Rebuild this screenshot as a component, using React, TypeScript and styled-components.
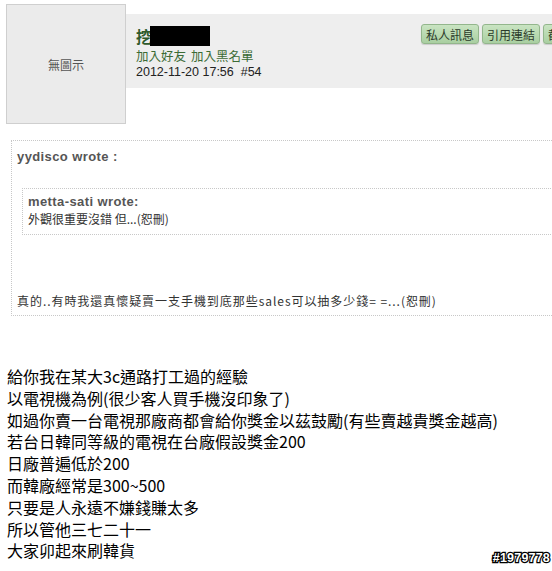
import React from "react";
import styled, { createGlobalStyle } from "styled-components";

const Global = createGlobalStyle`
  html, body { margin: 0; padding: 0; background: #ffffff; }
  body { font-family: "Liberation Sans", "Noto Sans CJK TC", sans-serif; }
`;

const Viewport = styled.div`
  position: relative;
  width: 552px;
  height: 571px;
  overflow: hidden;
  background: #fff;
`;

const Page = styled.div`
  width: 680px;
`;

const PostHeader = styled.div`
  display: flex;
  align-items: flex-start;
  padding: 4px 0 0 6px;
`;

const Avatar = styled.div`
  box-sizing: border-box;
  flex: 0 0 120px;
  height: 120px;
  background: #ebebeb;
  border: 1px solid #cfcfcf;
  display: flex;
  align-items: center;
  justify-content: center;
  font-size: 12px;
  color: #555;
`;

const Band = styled.div`
  flex: 1;
  margin-top: 10px;
  height: 74px;
  background: #eeeeee;
  display: flex;
  align-items: flex-start;
  padding-left: 10px;
`;

const Info = styled.div`
  flex: 0 0 285px;
  padding-top: 11px;
  display: flex;
  flex-direction: column;
`;

const NameRow = styled.div`
  display: flex;
  align-items: center;
  height: 21px;
  font-size: 16px;
  font-weight: bold;
  color: #2f5a2c;
  font-family: "Noto Sans CJK TC", sans-serif;
`;

const Redacted = styled.span`
  display: inline-block;
  width: 60px;
  height: 20px;
  background: #000;
  margin-left: -2px;
`;

const Links = styled.div`
  margin-top: 2px;
  display: flex;
  gap: 5px;
  font-size: 12.5px;
  line-height: 16px;
  color: #3b6b35;
  font-family: "Noto Sans CJK TC", sans-serif;
`;

const Meta = styled.div`
  font-size: 12.5px;
  line-height: 16px;
  color: #222;
`;

const Buttons = styled.div`
  display: flex;
  gap: 3px;
  padding-top: 10px;
`;

const Button = styled.div`
  box-sizing: border-box;
  height: 20px;
  padding: 0 4px;
  display: flex;
  align-items: center;
  border: 1px solid #93b68c;
  border-radius: 3px;
  background: linear-gradient(#c9e4c2, #a9cfa1);
  box-shadow: 0 1px 1px rgba(0, 0, 0, 0.15);
  font-size: 12px;
  color: #2b3a2a;
  font-family: "Noto Sans CJK TC", sans-serif;
`;

const Quote = styled.div`
  margin: 16px 0 0 11px;
  border: 1px dotted #c8c8c8;
  padding: 8px 0 5px 5px;
  font-size: 13px;
  line-height: 16px;
  color: #333;
`;

const QuoteTitle = styled.div`
  font-weight: bold;
  color: #555;
  letter-spacing: 0.4px;
  height: 16px;
`;

const InnerQuote = styled.div`
  margin: 23px 0 0 5px;
  border: 1px dotted #c8c8c8;
  padding: 5px 0 6px 5px;
`;

const QuoteText = styled.div<{ $gap?: number; $spacing?: number }>`
  margin-top: ${(p) => p.$gap ?? 0}px;
  letter-spacing: ${(p) => p.$spacing ?? 0}px;
  font-family: "Noto Sans CJK TC", sans-serif;
  font-size: 12px;
  line-height: 18px;
  color: #333;
  white-space: nowrap;
`;

const Body = styled.div`
  margin: 50px 0 0 7px;
  font-family: "Noto Sans CJK TC", sans-serif;
  font-size: 16px;
  line-height: 21.8px;
  color: #000;
`;

const Line = styled.div`
  white-space: nowrap;
`;

const Watermark = styled.div`
  position: absolute;
  right: 2px;
  bottom: 6px;
  font-family: "Liberation Sans", sans-serif;
  font-weight: bold;
  font-size: 12.5px;
  color: #fff;
  letter-spacing: 0.2px;
  -webkit-text-stroke: 2.5px #000;
  paint-order: stroke fill;
`;

const lines = [
  "給你我在某大3c通路打工過的經驗",
  "以電視機為例(很少客人買手機沒印象了)",
  "如過你賣一台電視那廠商都會給你獎金以茲鼓勵(有些賣越貴獎金越高)",
  "若台日韓同等級的電視在台廠假設獎金200",
  "日廠普遍低於200",
  "而韓廠經常是300~500",
  "只要是人永遠不嫌錢賺太多",
  "所以管他三七二十一",
  "大家卯起來刷韓貨",
];

export default function App() {
  return (
    <Viewport>
      <Global />
      <Page>
        <PostHeader>
          <Avatar>無圖示</Avatar>
          <Band>
            <Info>
              <NameRow>
                挖<Redacted />
              </NameRow>
              <Links>
                <span>加入好友</span>
                <span>加入黑名單</span>
              </Links>
              <Meta>2012-11-20 17:56 &nbsp;#54</Meta>
            </Info>
            <Buttons>
              <Button>私人訊息</Button>
              <Button>引用連結</Button>
              <Button>截圖</Button>
            </Buttons>
          </Band>
        </PostHeader>
        <Quote>
          <QuoteTitle>yydisco wrote :</QuoteTitle>
          <InnerQuote>
            <QuoteTitle>metta-sati wrote:</QuoteTitle>
            <QuoteText>外觀很重要沒錯 但...(恕刪)</QuoteText>
          </InnerQuote>
          <QuoteText $gap={57} $spacing={0.95}>
            真的..有時我還真懷疑賣一支手機到底那些sales可以抽多少錢= =...(恕刪)
          </QuoteText>
        </Quote>
        <Body>
          {lines.map((l) => (
            <Line key={l}>{l}</Line>
          ))}
        </Body>
      </Page>
      <Watermark>#1979778</Watermark>
    </Viewport>
  );
}
